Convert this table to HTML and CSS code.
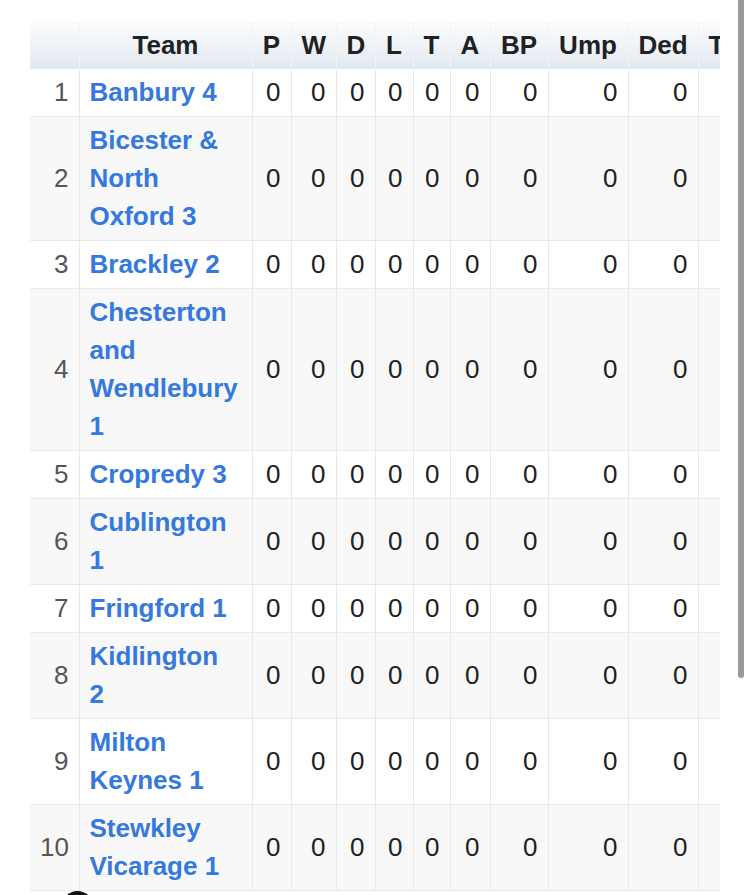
FILE: index.html
```html
<!DOCTYPE html>
<html lang="en">
<head>
<meta charset="utf-8">
<title>League table</title>
<link rel="stylesheet" href="styles.css">
</head>
<body>
<div class="page">
  <div class="table-wrap">
    <table class="league">
      <colgroup>
        <col class="c-rank"><col class="c-team"><col class="c-p"><col class="c-w"><col class="c-d"><col class="c-l"><col class="c-t"><col class="c-a"><col class="c-bp"><col class="c-ump"><col class="c-ded"><col class="c-total">
      </colgroup>
      <thead>
        <tr><th></th><th>Team</th><th>P</th><th>W</th><th>D</th><th>L</th><th>T</th><th>A</th><th>BP</th><th>Ump</th><th>Ded</th><th>Total</th></tr>
      </thead>
      <tbody>
        <tr><td class="rank">1</td><td class="team"><a href="#">Banbury 4</a></td><td>0</td><td>0</td><td>0</td><td>0</td><td>0</td><td>0</td><td>0</td><td>0</td><td>0</td><td></td></tr>
        <tr><td class="rank">2</td><td class="team"><a href="#">Bicester &amp;<br>North<br>Oxford 3</a></td><td>0</td><td>0</td><td>0</td><td>0</td><td>0</td><td>0</td><td>0</td><td>0</td><td>0</td><td></td></tr>
        <tr><td class="rank">3</td><td class="team"><a href="#">Brackley 2</a></td><td>0</td><td>0</td><td>0</td><td>0</td><td>0</td><td>0</td><td>0</td><td>0</td><td>0</td><td></td></tr>
        <tr><td class="rank">4</td><td class="team"><a href="#">Chesterton<br>and<br>Wendlebury<br>1</a></td><td>0</td><td>0</td><td>0</td><td>0</td><td>0</td><td>0</td><td>0</td><td>0</td><td>0</td><td></td></tr>
        <tr><td class="rank">5</td><td class="team"><a href="#">Cropredy 3</a></td><td>0</td><td>0</td><td>0</td><td>0</td><td>0</td><td>0</td><td>0</td><td>0</td><td>0</td><td></td></tr>
        <tr><td class="rank">6</td><td class="team"><a href="#">Cublington<br>1</a></td><td>0</td><td>0</td><td>0</td><td>0</td><td>0</td><td>0</td><td>0</td><td>0</td><td>0</td><td></td></tr>
        <tr><td class="rank">7</td><td class="team"><a href="#">Fringford 1</a></td><td>0</td><td>0</td><td>0</td><td>0</td><td>0</td><td>0</td><td>0</td><td>0</td><td>0</td><td></td></tr>
        <tr><td class="rank">8</td><td class="team"><a href="#">Kidlington<br>2</a></td><td>0</td><td>0</td><td>0</td><td>0</td><td>0</td><td>0</td><td>0</td><td>0</td><td>0</td><td></td></tr>
        <tr><td class="rank">9</td><td class="team"><a href="#">Milton<br>Keynes 1</a></td><td>0</td><td>0</td><td>0</td><td>0</td><td>0</td><td>0</td><td>0</td><td>0</td><td>0</td><td></td></tr>
        <tr><td class="rank">10</td><td class="team"><a href="#">Stewkley<br>Vicarage 1</a></td><td>0</td><td>0</td><td>0</td><td>0</td><td>0</td><td>0</td><td>0</td><td>0</td><td>0</td><td></td></tr>
      </tbody>
    </table>
  </div>
</div>
<div class="scroll-indicator"></div>
<div class="floating-dot"></div>
</body>
</html>
```
FILE: styles.css
```css
html, body {
  margin: 0;
  padding: 0;
  background: #ffffff;
}
body {
  font-family: "Liberation Sans", Arial, Helvetica, sans-serif;
  color: #202122;
  overflow: hidden;
  height: 895px;
}
.page {
  padding: 22px 0 0 30px;
}
.table-wrap {
  width: 690px;
  overflow: hidden;
}
.league {
  border-collapse: collapse;
  table-layout: fixed;
  width: 748px;
  font-size: 26px;
  line-height: 38px;
}
.c-rank { width: 49px; }
.c-team { width: 173px; }
.c-p { width: 39px; }
.c-w { width: 45px; }
.c-d { width: 39px; }
.c-l { width: 38px; }
.c-t { width: 37px; }
.c-a { width: 40px; }
.c-bp { width: 58px; }
.c-ump { width: 80px; }
.c-ded { width: 70px; }
.c-total { width: 80px; }

.league th {
  background: linear-gradient(to bottom, #fbfcfd 0%, #eef2f6 55%, #e2e8f0 100%);
  font-weight: bold;
  color: #202122;
  text-align: center;
  padding: 4px 10px 5px;
  border-left: 1px solid #f1f3f6;
  border-right: 1px solid #f1f3f6;
  white-space: nowrap;
  overflow: hidden;
}
.league th:first-child {
  border-left: none;
}
.league td {
  border: 1px solid #e9e9e9;
  padding: 4px 10px 5px;
  text-align: right;
  vertical-align: middle;
  color: #202122;
  white-space: nowrap;
}
.league td:first-child {
  border-left: none;
}
.league tbody tr:first-child td {
  border-top: none;
}
.league tbody tr:nth-child(even) td {
  background: #f8f8f8;
}
.league td.rank {
  color: #555555;
}
.league td.team {
  text-align: left;
  font-weight: bold;
}
.league td.team a {
  color: #3579de;
  text-decoration: none;
}
.scroll-indicator {
  position: fixed;
  top: 0;
  left: 738px;
  width: 6px;
  height: 678px;
  background: #999999;
  border-radius: 0 0 3px 3px;
}
.floating-dot {
  position: fixed;
  top: 891px;
  left: 62px;
  width: 31px;
  height: 31px;
  border-radius: 50%;
  background: #111111;
}
```
